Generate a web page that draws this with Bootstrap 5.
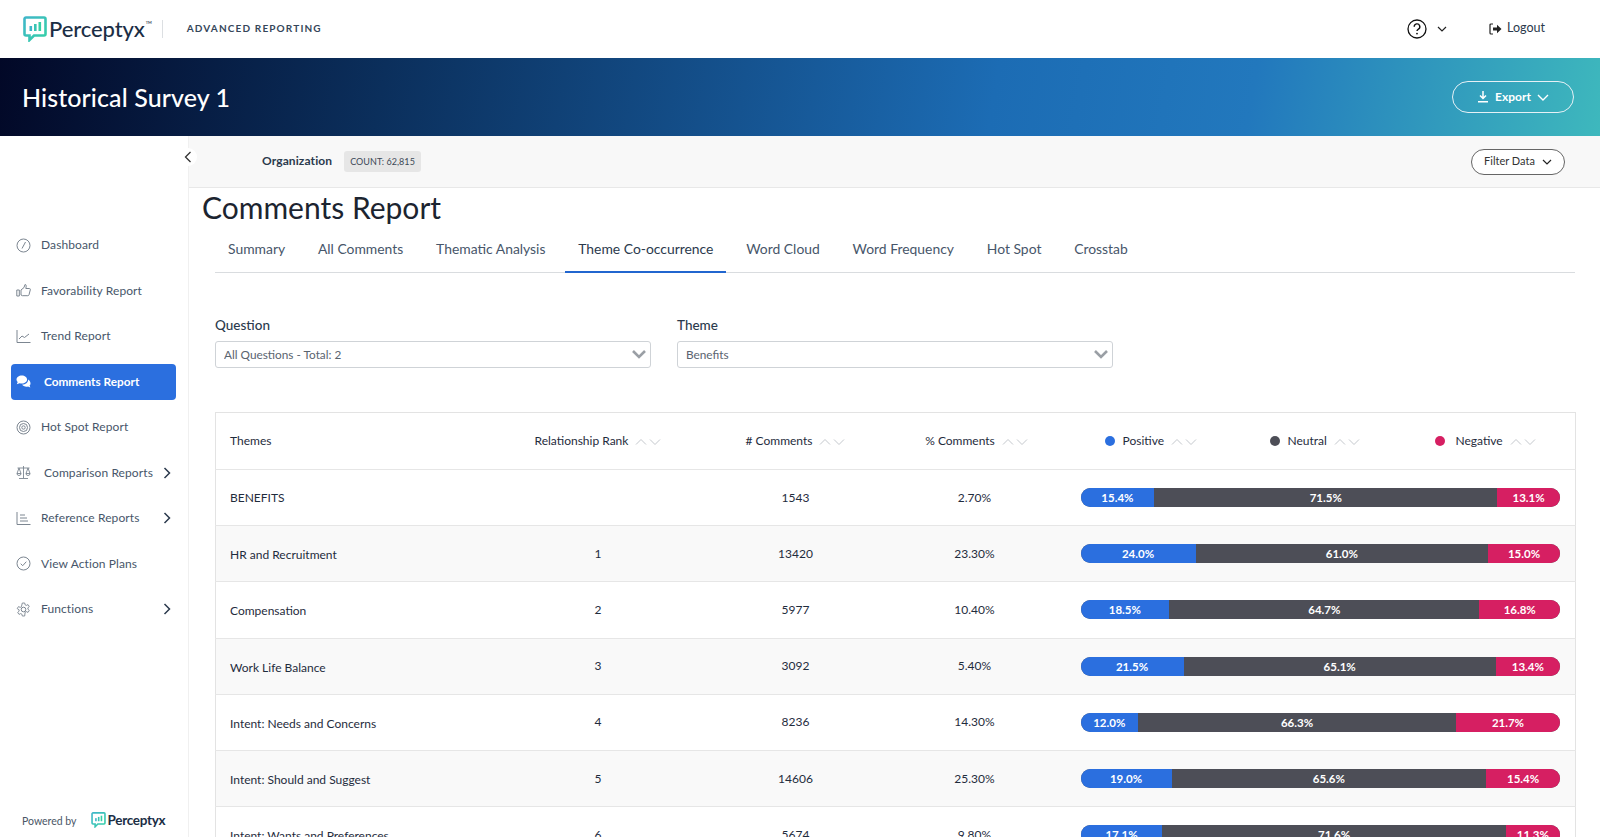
<!DOCTYPE html>
<html lang="en">
<head>
<meta charset="utf-8">
<title>Comments Report</title>
<link href="https://cdn.jsdelivr.net/npm/bootstrap@5.3.0/dist/css/bootstrap.min.css" rel="stylesheet">
<style>
html,body{height:837px;overflow:hidden}
body{font-family:"Lato","Liberation Sans",sans-serif;color:#2b3a4d;background:#fff}
.top-head{height:58px;padding:0 23px}
.brand-text{font-size:22px;font-weight:500;color:#1b2e45;line-height:1;letter-spacing:-.1px;margin-left:2px}
.brand-text sup{font-size:4px;top:-13px;margin-left:1px}
.brand-sep{width:1px;height:18px;background:#dcdfe2;margin:0 24px 0 10px}
.brand-sub{font-size:10px;font-weight:700;letter-spacing:1.15px;color:#35465a;margin-bottom:1px}
.logout-txt{font-size:12.5px;color:#2b3a4d;margin-left:5px;margin-bottom:1px}
.help-chev{margin-left:10px;margin-right:42px}
.hero{height:78px;padding:0 26px 0 22px;background:linear-gradient(100deg,#020827 0%,#0b2f5c 24%,#1c6cb4 62%,#2278bd 78%,#3eb8bd 100%)}
.hero-title{font-size:25px;font-weight:500;color:#fff;margin:0;letter-spacing:.1px}
.btn-export{height:32px;width:122px;border:1px solid #e6f1f6;border-radius:16px;color:#fff;font-size:12px;font-weight:700;padding:0;gap:6px}
.btn-export:hover{color:#fff}
.side{width:189px;height:701px;flex:none;border-right:1px solid #f0f0f0;padding:91.3px 12px 6px 11px;position:relative}
.side-item{height:36px;margin-bottom:9.5px;padding:0 0 0 5px;font-size:12px;color:#47566a;border-radius:4px;letter-spacing:.1px;text-decoration:none}
.side-item svg.ico{width:15px;height:15px;flex:none;margin-right:10px}
.side-item.sel{background:#2b6fdf;color:#fff;font-weight:700;letter-spacing:0;font-size:11.8px}
.side-item.shift span{margin-left:3px}
.side-arrow{margin-left:auto;margin-right:5px}
.collapse-dot{position:absolute;left:179px;top:12px;width:18px;height:18px;border-radius:50%;background:#fff}
.powered{margin-top:auto;padding-left:11px;height:22px}
.powered-lbl{font-size:10.5px;color:#4a5666;margin-right:14px;padding-top:3px}
.powered-name{font-size:13.5px;font-weight:700;color:#1b2e45;margin-left:2px;letter-spacing:-.3px}
.main-col{min-width:0}
.filter-strip{height:52px;background:#f8f8f8;border-bottom:1px solid #e8e8e8;padding:0 35px 0 73px}
.org-name{font-size:12px;font-weight:700;color:#2b3a4d;margin-right:12px;letter-spacing:.1px;margin-bottom:1px}
.count-chip{font-size:9px;font-weight:400;color:#3c4856;background:#e6e6e6;border-radius:3px;padding:3.500px 6px;letter-spacing:.05px}
.btn-filter{height:26px;width:94px;border:1px solid #666;border-radius:13px;font-size:11px;color:#333;padding:0;gap:7px;background:#fff}
.page-pad{padding:1px 25px 0 14px}
.page-title{font-size:30px;font-weight:400;color:#1c2430;line-height:36px;margin:0 0 5px -1px}
.inner{padding-left:12px}
.tab-row{border-bottom:1px solid #d9dcdf;height:43px;gap:6.8px;flex-wrap:nowrap}
.tab-row .nav-link{height:43px;padding:0 13px;font-size:13.9px;color:#47566a;border-bottom:2px solid transparent;line-height:38px;border-radius:0}
.tab-row .nav-link.active{color:#2b3a4d;border-bottom-color:#2166cf}
.pick-row{margin-top:43px;gap:26px}
.pick{width:436px}
.pick-lbl{font-size:13.5px;font-weight:500;color:#2b3a4d;margin-bottom:7px;line-height:18px;display:block}
.pick-sel{height:27px;font-size:11.8px;padding:0 30px 0 8px;color:#5a6470;border:1px solid #cfd3d7;border-radius:3px;background-image:none}
.pick-wrap{position:relative}
.pick-wrap svg{position:absolute;right:4px;top:8px}
.data-table{margin-top:44px;border:1px solid #e3e3e3;table-layout:fixed;width:1360px;font-size:12px;color:#1f2c3d;margin-bottom:0}
.data-table td,.data-table th{padding:0;height:56.2px;vertical-align:middle;border-bottom:1px solid #e6e6e6;font-weight:400;text-align:center;background:transparent;box-shadow:none}
.data-table th{height:57px}
.data-table .lead-cell{text-align:left;padding-left:14px}
.data-table tr.alt td{background:#f9f9f9}
.data-table tr.alt td.lead-cell,.data-table tr.low td.lead-cell{padding-top:3px}
.data-table .bar-cell{padding:0 15px 0 27px}
.data-table th.pct-head{padding-left:4px}
.sort-ico{margin-left:7px;vertical-align:-1px}
.senti-head{display:grid;grid-template-columns:165px 165px 165px;padding-left:51px;text-align:left}
.senti-dot{display:inline-block;width:10px;height:10px;border-radius:50%;margin-right:8px;vertical-align:-1px}
.dot-neg-gap{margin-right:11px}
.dot-pos{background:#2b6fdf}.dot-neu{background:#4d4e57}.dot-neg{background:#d61f62}
.senti-bar{height:19px;border-radius:10px;background:#4d4e57;font-size:11.5px}
.senti-bar .progress-bar{font-weight:700;color:#fff}
.seg-pos{background:#2b6fdf}.seg-neu{background:#4d4e57}.seg-neg{background:#d61f62}
</style>
</head>
<body>
<svg width="0" height="0" class="position-absolute">
  <defs>
    <linearGradient id="lg" x1="0" y1="0" x2="1" y2="1"><stop offset="0" stop-color="#3fb6c9"/><stop offset="1" stop-color="#35d0a6"/></linearGradient>
    <symbol id="mark" viewBox="0 0 24 26"><path d="M3 1.500h18a1.500 1.500 0 0 1 1.500 1.500v15a1.500 1.500 0 0 1-1.500 1.500H11l-4.500 4.500V19.500H3A1.500 1.500 0 0 1 1.500 18V3A1.500 1.500 0 0 1 3 1.500z" fill="none" stroke="url(#lg)" stroke-width="2.600"/><rect x="6.500" y="10" width="2.600" height="5" fill="#3fb6c9"/><rect x="11" y="8" width="2.600" height="7" fill="#38c4b4"/><rect x="15.500" y="6" width="2.600" height="9" fill="#35d0a6"/></symbol>
    <symbol id="updown" viewBox="0 0 26 8"><path d="M1 6.500 6 1.500l5 5M15 1.500l5 5 5-5" fill="none" stroke="#c4c8cd" stroke-width="1"/></symbol>
    <symbol id="chev-r" viewBox="0 0 8 12"><path d="M1.500 1 6.500 6l-5 5" fill="none" stroke="#2b3a4d" stroke-width="1.500"/></symbol>
  </defs>
</svg>

<header class="top-head d-flex align-items-center bg-white">
  <svg width="24" height="26"><use href="#mark"/></svg>
  <span class="brand-text">Perceptyx<sup>TM</sup></span>
  <span class="brand-sep"></span>
  <span class="brand-sub">ADVANCED REPORTING</span>
  <div class="ms-auto d-flex align-items-center">
    <svg width="20" height="20" viewBox="0 0 20 20"><circle cx="10" cy="10" r="9" fill="none" stroke="#111" stroke-width="1.300"/><path d="M7.200 7.700a2.800 2.800 0 1 1 4.200 2.400c-.9.500-1.400 1-1.400 2" fill="none" stroke="#111" stroke-width="1.400"/><circle cx="10" cy="14.600" r=".9" fill="#111"/></svg>
    <svg class="help-chev" width="10" height="6" viewBox="0 0 10 6"><path d="M1 1l4 4 4-4" fill="none" stroke="#222" stroke-width="1.200"/></svg>
    <svg width="13" height="12" viewBox="0 0 13 12"><path d="M4 1H2a1 1 0 0 0-1 1v8a1 1 0 0 0 1 1h2" fill="none" stroke="#222" stroke-width="1.200"/><path d="M4 4.500h4V1.800L12.500 6 8 10.200V7.500H4z" fill="#222"/></svg>
    <span class="logout-txt me-4 pe-2">Logout</span>
  </div>
</header>

<section class="hero d-flex align-items-center justify-content-between">
  <h1 class="hero-title">Historical Survey 1</h1>
  <button class="btn btn-export d-inline-flex align-items-center justify-content-center" type="button">
    <svg width="12" height="12" viewBox="0 0 12 12"><path d="M6 0v7M3 4.500 6 7.500l3-3M1 10.800h10" fill="none" stroke="#fff" stroke-width="1.500"/></svg>
    Export
    <svg width="12" height="7" viewBox="0 0 12 7"><path d="M1 1l5 5 5-5" fill="none" stroke="#fff" stroke-width="1.400"/></svg>
  </button>
</section>

<div class="d-flex">
  <aside class="side d-flex flex-column">
    <span class="collapse-dot d-flex align-items-center justify-content-center"><svg width="8" height="12" viewBox="0 0 8 12"><path d="M6.500 1 1.500 6l5 5" fill="none" stroke="#333" stroke-width="1.300"/></svg></span>
    <a class="side-item d-flex align-items-center" href="#"><svg class="ico" viewBox="0 0 15 15"><circle cx="7.500" cy="7.500" r="6.500" fill="none" stroke="#7c8691"/><path d="M6 10.500 9.500 4" stroke="#7c8691" fill="none"/></svg><span>Dashboard</span></a>
    <a class="side-item d-flex align-items-center" href="#"><svg class="ico" viewBox="0 0 15 15"><path d="M.8 7h2.500v6H.8zM5 7l3-2.500L9 1.500c1.300 0 1.500 1.500.8 4h3.700c.7 0 1 .6.800 1.300l-1.300 5c-.2.600-.6.900-1.200.9H6.500L5 12z" fill="none" stroke="#7c8691"/></svg><span>Favorability Report</span></a>
    <a class="side-item d-flex align-items-center" href="#"><svg class="ico" viewBox="0 0 15 15"><path d="M1 1v12.500h13.500" fill="none" stroke="#7c8691"/><path d="M3 10l3-3 2.500 1.500L13 5" fill="none" stroke="#7c8691"/></svg><span>Trend Report</span></a>
    <a class="side-item sel d-flex align-items-center shift" href="#"><svg class="ico" viewBox="0 0 15 15"><path d="M5.800 1.500C2.800 1.500.5 3.200.5 5.500c0 1 .5 1.900 1.200 2.600L.8 10.200l2.800-1c.7.200 1.400.3 2.200.3 3 0 5.300-1.800 5.300-4S8.800 1.500 5.800 1.500z" fill="#fff"/><path d="M12.200 5.500c.1 3-2.800 5-6 5 .7 1.300 2.300 2.200 4.300 2.200.5 0 1-.1 1.500-.2l2.300.9-.7-1.900c.6-.6.900-1.300.9-2.100 0-1.700-.9-3-2.300-3.900z" fill="#fff"/></svg><span>Comments Report</span></a>
    <a class="side-item d-flex align-items-center" href="#"><svg class="ico" viewBox="0 0 15 15"><circle cx="7.500" cy="7.500" r="6.500" fill="none" stroke="#7c8691"/><circle cx="7.500" cy="7.500" r="4" fill="none" stroke="#7c8691"/><circle cx="7.500" cy="7.500" r="1.700" fill="none" stroke="#7c8691"/></svg><span>Hot Spot Report</span></a>
    <a class="side-item d-flex align-items-center shift" href="#"><svg class="ico" viewBox="0 0 15 15"><path d="M7.500 1v12M3 13.500h9M1.500 3h12M3 3 1 8.500h4zM12 3l-2 5.500h4zM1 8.500a2 2 0 0 0 4 0M10 8.500a2 2 0 0 0 4 0" fill="none" stroke="#7c8691" stroke-width=".9"/></svg><span>Comparison Reports</span><svg class="side-arrow" width="8" height="12"><use href="#chev-r"/></svg></a>
    <a class="side-item d-flex align-items-center" href="#"><svg class="ico" viewBox="0 0 15 15"><path d="M1 1v12.500h13.500M4 4h5M4 7h7M4 10h8" fill="none" stroke="#7c8691"/></svg><span>Reference Reports</span><svg class="side-arrow" width="8" height="12"><use href="#chev-r"/></svg></a>
    <a class="side-item d-flex align-items-center" href="#"><svg class="ico" viewBox="0 0 15 15"><circle cx="7.500" cy="7.500" r="6.500" fill="none" stroke="#7c8691"/><path d="M4.700 7.700 6.700 9.700l3.600-4" fill="none" stroke="#7c8691"/></svg><span>View Action Plans</span></a>
    <a class="side-item d-flex align-items-center" href="#"><svg class="ico" viewBox="0 0 15 15"><circle cx="7.500" cy="7.500" r="2.300" fill="none" stroke="#7c8691"/><path d="M6.300 1h2.400l.4 1.800 1.200.6 1.700-.8 1.300 2-1.400 1.200v1.400l1.400 1.200-1.300 2-1.700-.8-1.200.6L8.700 14H6.300l-.4-1.800-1.200-.6-1.700.8-1.300-2 1.400-1.200V7.800L1.200 6.600l1.300-2 1.700.8 1.200-.6z" fill="none" stroke="#7c8691" stroke-width=".9"/></svg><span>Functions</span><svg class="side-arrow" width="8" height="12"><use href="#chev-r"/></svg></a>
    <div class="powered d-flex align-items-center">
      <span class="powered-lbl">Powered by</span>
      <svg width="15" height="16"><use href="#mark"/></svg>
      <span class="powered-name">Perceptyx</span>
    </div>
  </aside>

  <main class="main-col flex-grow-1">
    <div class="filter-strip d-flex align-items-center">
      <span class="org-name">Organization</span>
      <span class="count-chip">COUNT: 62,815</span>
      <button class="btn btn-filter ms-auto d-inline-flex align-items-center justify-content-center" type="button">Filter Data
        <svg width="10" height="6" viewBox="0 0 10 6"><path d="M1 1l4 4 4-4" fill="none" stroke="#222" stroke-width="1.200"/></svg>
      </button>
    </div>
    <div class="page-pad">
      <h2 class="page-title">Comments Report</h2>
      <div class="inner">
        <ul class="nav tab-row">
          <li class="nav-item"><a class="nav-link" href="#">Summary</a></li>
          <li class="nav-item"><a class="nav-link" href="#">All Comments</a></li>
          <li class="nav-item"><a class="nav-link" href="#">Thematic Analysis</a></li>
          <li class="nav-item"><a class="nav-link active" href="#">Theme Co-occurrence</a></li>
          <li class="nav-item"><a class="nav-link" href="#">Word Cloud</a></li>
          <li class="nav-item"><a class="nav-link" href="#">Word Frequency</a></li>
          <li class="nav-item"><a class="nav-link" href="#">Hot Spot</a></li>
          <li class="nav-item"><a class="nav-link" href="#">Crosstab</a></li>
        </ul>
        <div class="d-flex pick-row">
          <div class="pick">
            <label class="pick-lbl">Question</label>
            <div class="pick-wrap">
              <select class="form-select pick-sel"><option>All Questions - Total: 2</option></select>
              <svg width="16" height="11" viewBox="0 0 16 11"><path d="M2 2l6 6 6-6" fill="none" stroke="#9a9fa5" stroke-width="2.600"/></svg>
            </div>
          </div>
          <div class="pick">
            <label class="pick-lbl">Theme</label>
            <div class="pick-wrap">
              <select class="form-select pick-sel"><option>Benefits</option></select>
              <svg width="16" height="11" viewBox="0 0 16 11"><path d="M2 2l6 6 6-6" fill="none" stroke="#9a9fa5" stroke-width="2.600"/></svg>
            </div>
          </div>
        </div>
        <table class="table data-table">
          <colgroup><col style="width:285px"><col style="width:195px"><col style="width:200px"><col style="width:158px"><col style="width:522px"></colgroup>
          <thead>
            <tr>
              <th class="lead-cell">Themes</th>
              <th>Relationship Rank<svg class="sort-ico" width="26" height="8"><use href="#updown"/></svg></th>
              <th># Comments<svg class="sort-ico" width="26" height="8"><use href="#updown"/></svg></th>
              <th class="pct-head">% Comments<svg class="sort-ico" width="26" height="8"><use href="#updown"/></svg></th>
              <th><div class="senti-head">
                <span><i class="senti-dot dot-pos"></i>Positive<svg class="sort-ico" width="26" height="8"><use href="#updown"/></svg></span>
                <span><i class="senti-dot dot-neu"></i>Neutral<svg class="sort-ico" width="26" height="8"><use href="#updown"/></svg></span>
                <span><i class="senti-dot dot-neg dot-neg-gap"></i>Negative<svg class="sort-ico" width="26" height="8"><use href="#updown"/></svg></span>
              </div></th>
            </tr>
          </thead>
          <tbody>
            <tr><td class="lead-cell">BENEFITS</td><td></td><td>1543</td><td>2.70%</td><td class="bar-cell"><div class="progress senti-bar"><div class="progress-bar seg-pos" style="width:15.4%">15.4%</div><div class="progress-bar seg-neu" style="width:71.5%">71.5%</div><div class="progress-bar seg-neg" style="width:13.1%">13.1%</div></div></td></tr>
            <tr class="alt"><td class="lead-cell">HR and Recruitment</td><td>1</td><td>13420</td><td>23.30%</td><td class="bar-cell"><div class="progress senti-bar"><div class="progress-bar seg-pos" style="width:24%">24.0%</div><div class="progress-bar seg-neu" style="width:61%">61.0%</div><div class="progress-bar seg-neg" style="width:15%">15.0%</div></div></td></tr>
            <tr class="low"><td class="lead-cell">Compensation</td><td>2</td><td>5977</td><td>10.40%</td><td class="bar-cell"><div class="progress senti-bar"><div class="progress-bar seg-pos" style="width:18.5%">18.5%</div><div class="progress-bar seg-neu" style="width:64.7%">64.7%</div><div class="progress-bar seg-neg" style="width:16.8%">16.8%</div></div></td></tr>
            <tr class="alt"><td class="lead-cell">Work Life Balance</td><td>3</td><td>3092</td><td>5.40%</td><td class="bar-cell"><div class="progress senti-bar"><div class="progress-bar seg-pos" style="width:21.5%">21.5%</div><div class="progress-bar seg-neu" style="width:65.1%">65.1%</div><div class="progress-bar seg-neg" style="width:13.4%">13.4%</div></div></td></tr>
            <tr class="low"><td class="lead-cell">Intent: Needs and Concerns</td><td>4</td><td>8236</td><td>14.30%</td><td class="bar-cell"><div class="progress senti-bar"><div class="progress-bar seg-pos" style="width:12%">12.0%</div><div class="progress-bar seg-neu" style="width:66.3%">66.3%</div><div class="progress-bar seg-neg" style="width:21.7%">21.7%</div></div></td></tr>
            <tr class="alt"><td class="lead-cell">Intent: Should and Suggest</td><td>5</td><td>14606</td><td>25.30%</td><td class="bar-cell"><div class="progress senti-bar"><div class="progress-bar seg-pos" style="width:19%">19.0%</div><div class="progress-bar seg-neu" style="width:65.6%">65.6%</div><div class="progress-bar seg-neg" style="width:15.4%">15.4%</div></div></td></tr>
            <tr class="low"><td class="lead-cell">Intent: Wants and Preferences</td><td>6</td><td>5674</td><td>9.80%</td><td class="bar-cell"><div class="progress senti-bar"><div class="progress-bar seg-pos" style="width:17.1%">17.1%</div><div class="progress-bar seg-neu" style="width:71.6%">71.6%</div><div class="progress-bar seg-neg" style="width:11.3%">11.3%</div></div></td></tr>
          </tbody>
        </table>
      </div>
    </div>
  </main>
</div>
<script src="https://cdn.jsdelivr.net/npm/bootstrap@5.3.0/dist/js/bootstrap.bundle.min.js"></script>
</body>
</html>
